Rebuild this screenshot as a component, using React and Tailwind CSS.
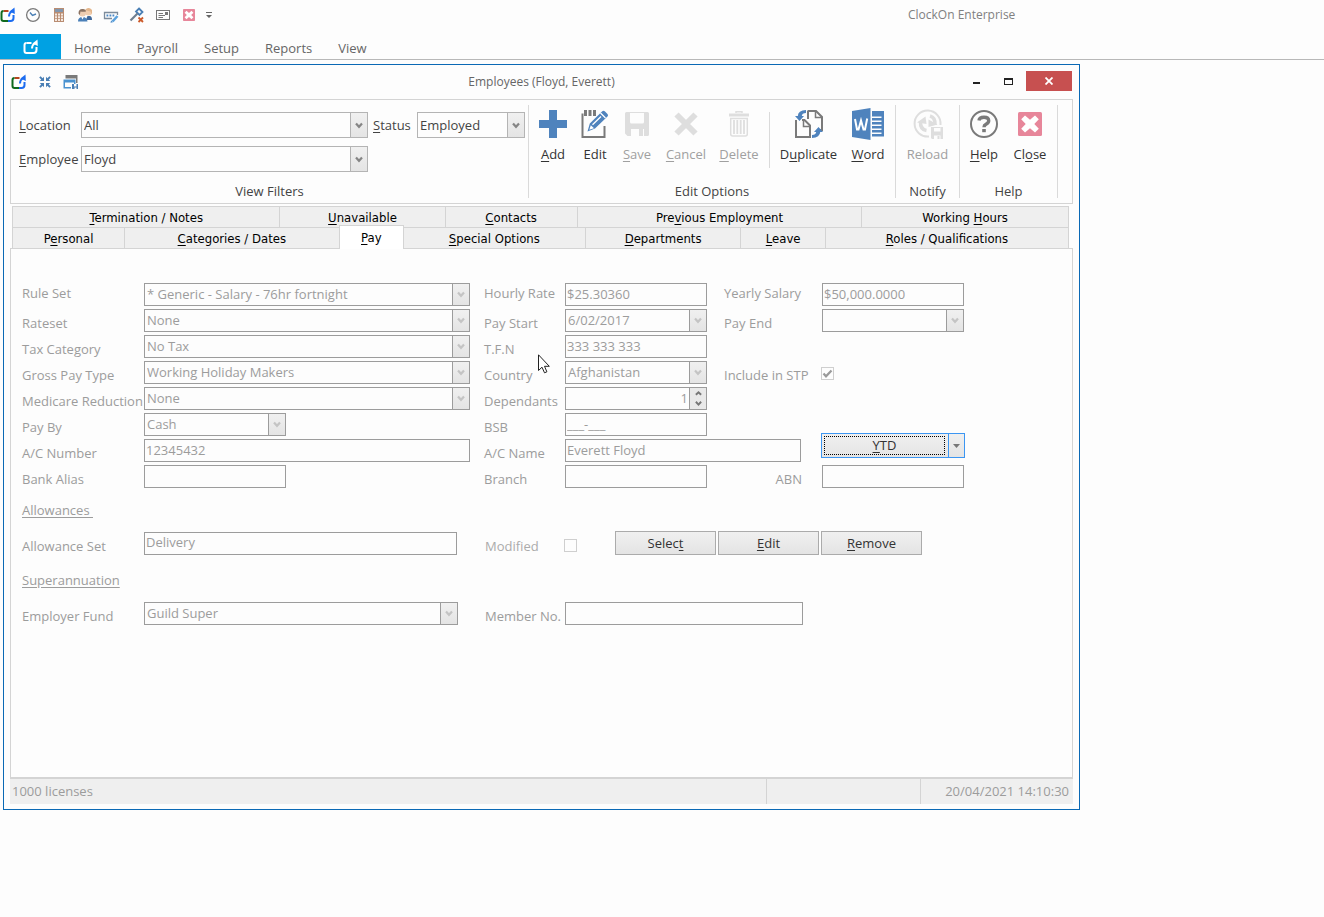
import React from "react";

const SANS = "font-['Open_Sans','Noto_Sans',sans-serif]";

/* Splits "Lo&cation" style captions and underlines the access key. */
function Key({ text }) {
  const at = text.indexOf("&");
  if (at < 0) return <>{text}</>;
  return (
    <>
      {text.slice(0, at)}
      <span className="underline underline-offset-2">{text[at + 1]}</span>
      {text.slice(at + 2)}
    </>
  );
}

/* ---------- icons ---------- */

function Logo({ mono = false }) {
  const a = mono ? "#fff" : "#b5441c";
  const b = mono ? "#fff" : "#0f6a1e";
  const c = mono ? "#fff" : "#1c6cf0";
  return (
    <svg width="16" height="16" viewBox="0 0 16 16" fill="none" strokeWidth="2" aria-hidden="true">
      <path d="M8.5 4H3.5" stroke={a} />
      <path d="M3.5 4Q1.5 4 1.500 6V12Q1.500 14 3.500 14H8" stroke={b} />
      <path d="M8 14H10.500Q13.500 14 13.500 11V8" stroke={c} />
      <path d="M9 9.500Q9 6 12 4" stroke={c} />
      <path d="M9.500 4.500 14.500.5 14.800 7Z" fill={c} />
    </svg>
  );
}

const ClockIcon = () => (
  <svg width="16" height="16" viewBox="0 0 16 16" fill="none" aria-hidden="true">
    <circle cx="8" cy="8" r="6.4" stroke="#7a7a7a" strokeWidth="1.3" />
    <path d="M5 5.500 7.500 8.500 11 7" stroke="#4a7fb5" strokeWidth="1.400" />
  </svg>
);
const CalcIcon = () => (
  <svg width="12" height="14" viewBox="0 0 12 14" aria-hidden="true">
    <rect x="1" width="10" height="14" fill="#b98d72" />
    <rect x="2" y="1" width="8" height="3" fill="#8296ad" />
    <path d="M2 5.500h2v2H2zM5 5.500h2v2H5zM8 5.500h2v2H8zM2 8.300h2v2H2zM5 8.300h2v2H5zM8 8.300h2v2H8zM2 11h2v2H2zM5 11h2v2H5zM8 11h2v2H8z" fill="#f4e9e2" />
  </svg>
);
const PeopleIcon = () => (
  <svg width="16" height="16" viewBox="0 0 16 16" aria-hidden="true">
    <circle cx="11.500" cy="5" r="3.600" fill="#f0cdae" />
    <path d="M8 3Q11.500-.8 15 3V7.500L13.500 4.500Z" fill="#e3b68c" />
    <path d="M9 12.500 10.500 9H13Q15 9.500 15 13H9z" fill="#40689a" />
    <circle cx="5.500" cy="6" r="3.500" fill="#edcdb2" />
    <path d="M1.500 6.500Q1.500 1.500 6 2q3 .5 3 2.500Q6 5 3.500 4.500L2.800 8Z" fill="#8a7262" />
    <path d="M1 14.500Q1 10 5.500 10T10.500 14.500Z" fill="#4b80b8" />
    <path d="m4.300 10 1.200 2.500L6.800 10z" fill="#fff" />
  </svg>
);
const FieldPenIcon = () => (
  <svg width="17" height="15" viewBox="0 0 17 15" fill="none" aria-hidden="true">
    <path d="M9 10.500H1.500V4.500H14.500V7" stroke="#7c8b9b" strokeWidth="1.300" />
    <path d="M3.500 7.500h1.800M6.500 7.500h1.800M9.500 7.500h1.800" stroke="#4a88c6" strokeWidth="1.800" />
    <path d="M9.500 13.500 14.500 8" stroke="#5ba1dc" strokeWidth="2.600" />
    <path d="m7.500 14.800.6-2.300 1.900 1.700z" fill="#4a88c6" />
  </svg>
);
const KeyXIcon = () => (
  <svg width="16" height="16" viewBox="0 0 16 16" fill="none" aria-hidden="true">
    <path d="M10 1.500 13.500 5 10.500 8 7 4.500Z" stroke="#4a7fb5" strokeWidth="1.800" />
    <path d="M8.500 6.500 1.500 13.500" stroke="#6f7f90" strokeWidth="2.200" />
    <path d="m9.500 10.500 4.500 4.500m0-4.500L9.500 15" stroke="#cc5a2a" strokeWidth="1.800" />
  </svg>
);
const CardIcon = () => (
  <svg width="14" height="12" viewBox="0 0 14 12" fill="none" stroke="#777" aria-hidden="true">
    <rect x=".5" y="1.500" width="13" height="9" />
    <path d="M2.500 4.500H7M2.500 6.500H9M2.500 8.500H7" />
    <rect x="9" y="3" width="3" height="3" fill="#777" stroke="none" />
  </svg>
);
function RedX({ size }) {
  return (
    <svg width={size} height={size} viewBox="0 0 24 24" aria-hidden="true">
      <rect width="24" height="24" rx="1.500" fill="#e7869a" />
      <path d="m7 3.500 5 4.300 5-4.300 3.800 3.800L16.300 12l4.500 4.700L17 20.500l-5-4.300-5 4.300-3.800-3.800L7.700 12 3.200 7.300z" fill="#fff" />
    </svg>
  );
}
const ShrinkIcon = () => (
  <svg width="12" height="12" viewBox="0 0 12 12" fill="#4a7fb5" aria-hidden="true">
    <path d="M5 5H.8L2.200 3.600.2 1.600 1.600.2l2 2L5 .8zM7 5h4.200L9.800 3.600l2-2L10.400.2l-2 2L7 .8zM5 7H.8l1.400 1.400-2 2 1.400 1.400 2-2L5 11.200zM7 7h4.200L9.800 8.400l2 2-1.400 1.400-2-2L7 11.200z" />
  </svg>
);
const WindowsIcon = () => (
  <svg width="16" height="16" viewBox="0 0 16 16" aria-hidden="true">
    <path d="M2.500 1h12v8h-1.500V4.500H2.500z" fill="#7a7a7a" />
    <path d="M.5 5.500h12V10H11V8.500H2V13h6v1.500H.5z" fill="#4a92d0" />
    <path d="M9 10h2v2.500h2.500V10H15V15h-1.500v-1.500h-2V15H9z" fill="#4a7fb5" />
  </svg>
);

const AddIcon = () => (
  <svg width="28" height="28" viewBox="0 0 28 28" aria-hidden="true">
    <path d="M10 0h8v10h10v8H18v10h-8V18H0v-8h10z" fill="#4f83bd" />
  </svg>
);
const EditIcon = () => (
  <svg width="28" height="28" viewBox="0 0 28 28" aria-hidden="true">
    <path d="M1.500 3.500V27H23.500V16" fill="none" stroke="#7a7a7a" strokeWidth="2" />
    <path d="M3 0h3v6H3zM7.500 0h3v6h-3zM12 0h3v6h-3z" fill="#7a7a7a" />
    <path d="m6.500 21.500 2.300-8L21 1.500q1.500-1.500 3 0L26.500 4q1.200 1.300 0 2.600L14 18.500z" fill="#4f83bd" />
    <path d="m8.300 19.800 1.500-4.600 3.200 3z" fill="#fff" />
    <path d="m11.500 14.800 8.500-8.300M19.500 3l5 5" stroke="#fff" strokeWidth="1.300" />
  </svg>
);
const SaveIcon = () => (
  <svg width="24" height="24" viewBox="0 0 24 24" aria-hidden="true">
    <path fillRule="evenodd" d="M0 1.500Q0 0 1.500 0h21Q24 0 24 1.500v21Q24 24 22.500 24H2.500L0 21.500zM5 0v10q0 1.500 1.500 1.500h11Q19 11.500 19 10V0zM6 17v7h13v-7z" fill="#dedede" />
    <path d="M5 0h14v1H5zM14 17h4v7h-4z" fill="#dedede" />
  </svg>
);
const CancelIcon = () => (
  <svg width="24" height="24" viewBox="0 0 24 24" fill="none" stroke="#dedede" strokeWidth="6" aria-hidden="true">
    <path d="m2.500 2.500 19 19m0-19-19 19" />
  </svg>
);
const TrashIcon = () => (
  <svg width="20" height="26" viewBox="0 0 20 26" fill="none" stroke="#dedede" aria-hidden="true">
    <path d="M7 2V.8h6V2" strokeWidth="1.500" />
    <path d="M0 4h20" strokeWidth="3" />
    <path d="M1.700 7.500h16.600V23q0 2-2 2H3.700q-2 0-2-2z" strokeWidth="1.500" />
    <path d="M5 9v14M8.300 9v14M11.700 9v14M15 9v14" strokeWidth="1.800" />
  </svg>
);
const DuplicateIcon = () => (
  <svg width="28" height="28" viewBox="0 0 28 28" fill="none" aria-hidden="true">
    <path d="M12.500 1h8.500l6 6v13H23" stroke="#7a7a7a" strokeWidth="2" />
    <path d="M20.500 1v6.500H27M8.500 10v6.500H15" stroke="#7a7a7a" strokeWidth="1.500" />
    <path d="M1 10v17h14V15.500L9.500 10H7" stroke="#7a7a7a" strokeWidth="2" />
    <path d="M13 9V1" stroke="#7a7a7a" strokeWidth="2" />
    <path d="M11 0v3Q7 3 6.800 6H9L4.500 11 0 6h2.800Q3 .5 11 0zM17 28v-3q3.800 0 4.200-3H19l4.500-5 4.500 5h-2.800q-.2 5.500-8.200 6z" fill="#4f83bd" />
  </svg>
);
const WordIcon = () => (
  <svg width="32" height="32" viewBox="0 0 32 32" aria-hidden="true">
    <path d="M0 3 18.500 0v32L0 29z" fill="#4f83bd" />
    <path d="M20 3H32V28.500H20V26h9.500v-1.500H20v-2.500h9.500v-1.500H20V18h9.500v-1.500H20V14h9.500v-1.500H20V10h9.500V8.500H20z" fill="#4f83bd" />
    <path d="m3 11 2 10.500h1.500L9 12.500l2.500 9H13L15.200 10.500" fill="none" stroke="#fff" strokeWidth="2" />
  </svg>
);
const ReloadIcon = () => (
  <svg width="30" height="30" viewBox="0 0 30 30" fill="none" aria-hidden="true">
    <path d="M16 27.500A13 13 0 1 1 27.500 16" stroke="#dedede" strokeWidth="2" />
    <path d="M13.500 21.500Q7 20.500 7.500 12.500" stroke="#dedede" strokeWidth="3.500" />
    <path d="M4 13.500 12.500 7.500 13.500 15Z" fill="#dedede" />
    <path d="M17 7Q22.500 8.500 22 16" stroke="#dedede" strokeWidth="3.500" />
    <path d="M15.500 10.500V18L24.500 15.500Z" fill="#dedede" />
    <path fillRule="evenodd" d="M18 18h12v12H19l-1-1zm3 0v4.500h6.500V18zm0 8.500V30h6.500v-3.500z" fill="#dedede" />
    <path d="M21 18h6.500v1H21zM24.500 27h2v3h-2z" fill="#dedede" />
  </svg>
);
const HelpIcon = () => (
  <svg width="28" height="28" viewBox="0 0 28 28" fill="none" stroke="#7a7a7a" aria-hidden="true">
    <circle cx="14" cy="14" r="13" strokeWidth="2" />
    <path d="M9 10.500Q9.300 7.200 14 7.200t4.700 3.600Q18.700 12.800 16 14.200 14 15.200 14 17.200" strokeWidth="3.400" />
    <path d="M12.200 19h3.600v3.200h-3.600z" fill="#7a7a7a" stroke="none" />
  </svg>
);

function Chevron({ flip = false, className = "" }) {
  return (
    <svg width="8" height="7" viewBox="0 0 8 7" fill="none" stroke="currentColor" strokeWidth="2.200" className={className} aria-hidden="true">
      <path d={flip ? "M1 5 4 2.200 7 5" : "M1 1.500 4 4.800 7 1.500"} />
    </svg>
  );
}

/* ---------- form parts ---------- */

function Combo({ id, value, className, disabled = false, tall = false }) {
  return (
    <div className={"relative " + className}>
      <select
        id={id}
        disabled={disabled}
        defaultValue={value}
        className={
          "block w-full appearance-none rounded-none border pl-[2px] pr-5 text-[13px] opacity-100 outline-none " +
          (tall ? "h-[26px] border-[#b4b4b4] pt-[2px] text-[#444]" : "h-[23px] border-[#9c9c9c] text-[#9c9c9c]")
        }
      >
        <option value={value}>{value}</option>
      </select>
      <span
        className={
          "pointer-events-none absolute inset-y-px right-px flex w-[17px] items-center justify-center border-l bg-gradient-to-b from-[#f0f0f0] to-[#e4e4e4] " +
          (tall ? "border-[#b4b4b4] text-[#858585]" : "border-[#9c9c9c] text-[#c4c4c4]")
        }
      >
        <Chevron />
      </span>
    </div>
  );
}

function Box({ id, value = "", className }) {
  return (
    <input
      id={id}
      type="text"
      disabled
      defaultValue={value}
      className={"block h-[23px] border border-[#9c9c9c] bg-transparent px-px pb-[2px] text-[13px] text-[#9c9c9c] " + className}
    />
  );
}

function Label({ htmlFor, children, className = "" }) {
  return (
    <label htmlFor={htmlFor} className={"whitespace-nowrap leading-[17px] " + (className || "pt-[6px]")}>
      {children}
    </label>
  );
}

function Check({ id, checked = false, className = "" }) {
  return (
    <span className={"relative block size-[13px] " + className}>
      <input id={id} type="checkbox" disabled defaultChecked={checked} className="block size-[13px] appearance-none border border-[#cfcfcf]" />
      {checked && (
        <svg width="13" height="13" viewBox="0 0 13 13" fill="none" className="pointer-events-none absolute inset-0" aria-hidden="true">
          <path d="M2.500 6.500 5 9.300 10.500 3.500" stroke="#9a9a9a" strokeWidth="2.200" />
        </svg>
      )}
    </span>
  );
}

function PushButton({ text }) {
  return (
    <button type="button" className="h-6 w-[101px] border border-[#ababab] bg-gradient-to-b from-[#f0f0f0] to-[#e4e4e4] pt-px text-[#333]">
      <Key text={text} />
    </button>
  );
}

function Tool({ text, icon, className, disabled = false }) {
  return (
    <button type="button" disabled={disabled} className={"flex flex-col items-center gap-[6px] " + className + (disabled ? " text-[#a0a0a0]" : " text-[#333]")}>
      <span className="flex h-8 items-center justify-center">{icon}</span>
      <span className="leading-[17px]"><Key text={text} /></span>
    </button>
  );
}

function Group({ caption, className, children }) {
  return (
    <section className={"flex flex-col justify-between border-r border-[#dadada] " + className}>
      {children}
      <h2 className="text-center leading-[13px] text-[#444]">{caption}</h2>
    </section>
  );
}

const TABS_TOP = [
  ["&Termination / Notes", "flex-[268_1_0%]"],
  ["&Unavailable", "flex-[165_1_0%]"],
  ["&Contacts", "flex-[132_1_0%]"],
  ["Pre&vious Employment", "flex-[285_1_0%]"],
  ["Working &Hours", "flex-[207_1_0%]"],
];
const TABS_BOTTOM = [
  ["P&ersonal", "flex-[112_1_0%]"],
  ["&Categories / Dates", "flex-[215_1_0%]"],
  ["&Pay", "flex-[64_1_0%]"],
  ["&Special Options", "flex-[182_1_0%]"],
  ["&Departments", "flex-[156_1_0%]"],
  ["&Leave", "flex-[84_1_0%]"],
  ["&Roles / Qualifications", "flex-[244_1_0%]"],
];

function TabRow({ tabs }) {
  return (
    <div role="tablist" className="flex h-[21px] items-end border-l border-[#d4d4d4]">
      {tabs.map(([text, grow]) => {
        const active = text === "&Pay";
        return (
          <button
            key={text}
            type="button"
            role="tab"
            aria-selected={active}
            className={
              "min-w-0 border-r border-t border-[#d4d4d4] pt-px leading-5 " + grow + (active ? " z-10 -mb-px -ml-px h-6 border-l bg-white" : " h-[21px] bg-[#efefef]")
            }
          >
            <Key text={text} />
          </button>
        );
      })}
    </div>
  );
}

function PayForm() {
  return (
    <form className="px-[11px] pt-[34px] text-[13px] text-[#9c9c9c]">
      <div className="grid grid-cols-[122px_340px_81px_159px_98px_143px] grid-rows-[repeat(8,23px)] items-center gap-y-[3px]">
        <Label htmlFor="rule" className="-mt-[2px]">Rule Set</Label>
        <Combo id="rule" value="* Generic - Salary - 76hr fortnight" className="w-[326px]" disabled />
        <Label htmlFor="hourly" className="-mt-[2px]">Hourly Rate</Label>
        <Box id="hourly" value="$25.30360" className="w-[142px]" />
        <Label htmlFor="yearly" className="-mt-[2px]">Yearly Salary</Label>
        <Box id="yearly" value="$50,000.0000" className="w-[142px]" />

        <Label htmlFor="rateset">Rateset</Label>
        <Combo id="rateset" value="None" className="w-[326px]" disabled />
        <Label htmlFor="start">Pay Start</Label>
        <Combo id="start" value="6/02/2017" className="w-[142px]" disabled />
        <Label htmlFor="end">Pay End</Label>
        <Combo id="end" value="" className="w-[142px]" disabled />

        <Label htmlFor="tax">Tax Category</Label>
        <Combo id="tax" value="No Tax" className="w-[326px]" disabled />
        <Label htmlFor="tfn">T.F.N</Label>
        <Box id="tfn" value="333 333 333" className="w-[142px]" />

        <Label htmlFor="gross" className="col-start-1 pt-[6px]">Gross Pay Type</Label>
        <Combo id="gross" value="Working Holiday Makers" className="w-[326px]" disabled />
        <Label htmlFor="country">Country</Label>
        <Combo id="country" value="Afghanistan" className="w-[142px]" disabled />
        <Label htmlFor="stp">Include in STP</Label>
        <Check id="stp" checked className="-ml-px mt-[2px]" />

        <Label htmlFor="medicare">Medicare Reduction</Label>
        <Combo id="medicare" value="None" className="w-[326px]" disabled />
        <Label htmlFor="dependants">Dependants</Label>
        <div className="flex h-[23px] w-[142px] border border-[#9c9c9c]">
          <input id="dependants" type="text" inputMode="numeric" disabled defaultValue="1" className="min-w-0 flex-1 bg-transparent pr-px text-right text-[#9c9c9c]" />
          <div className="flex w-[17px] flex-col border-l border-[#9c9c9c] bg-[#e9e9e9] text-[#777]">
            <button type="button" aria-label="Increase" className="flex flex-1 items-center justify-center"><Chevron flip className="size-[7px]" /></button>
            <button type="button" aria-label="Decrease" className="flex flex-1 items-center justify-center"><Chevron className="size-[7px]" /></button>
          </div>
        </div>

        <Label htmlFor="payby" className="col-start-1 pt-[6px]">Pay By</Label>
        <Combo id="payby" value="Cash" className="w-[142px]" disabled />
        <Label htmlFor="bsb">BSB</Label>
        <Box id="bsb" value="___-___" className="w-[142px]" />

        <Label htmlFor="acnumber" className="col-start-1 row-start-7 pt-[6px]">A/C Number</Label>
        <Box id="acnumber" value="12345432" className="row-start-7 w-[326px]" />
        <Label htmlFor="acname" className="row-start-7 pt-[6px]">A/C Name</Label>
        <Box id="acname" value="Everett Floyd" className="col-span-2 row-start-7 w-[236px]" />

        <div className="col-start-6 row-span-2 row-start-6 -ml-px mb-1 flex h-[25px] w-[144px] self-end border border-[#3c96f2] bg-gradient-to-b from-[#f0f0f0] to-[#e4e4e4]">
          <button type="button" className="m-[2px] mr-[3px] flex flex-1 items-center justify-center border border-dotted border-black text-[#333]"><Key text="&YTD" /></button>
          <button type="button" aria-label="YTD options" className="flex w-4 items-center justify-center border-l border-[#3c96f2]">
            <svg width="7" height="4" viewBox="0 0 7 4" fill="#777" aria-hidden="true"><path d="M0 0h7L3.500 4z" /></svg>
          </button>
        </div>

        <Label htmlFor="alias" className="col-start-1 row-start-8 pt-[6px]">Bank Alias</Label>
        <Box id="alias" className="row-start-8 w-[142px]" />
        <Label htmlFor="branch" className="row-start-8 pt-[6px]">Branch</Label>
        <Box id="branch" className="row-start-8 w-[142px]" />
        <Label htmlFor="abn" className="row-start-8 pr-5 pt-[6px] text-right">ABN</Label>
        <Box id="abn" className="row-start-8 w-[142px]" />
      </div>

      <h3 className="mt-[14px] whitespace-pre leading-[17px] underline underline-offset-2">{"Allowances "}</h3>
      <div className="mt-3 grid grid-cols-[122px_341px_79px_51px_1fr] items-center">
        <Label htmlFor="allowance">Allowance Set</Label>
        <Box id="allowance" value="Delivery" className="w-[313px]" />
        <Label htmlFor="modified" className="pt-[6px] text-[#ababab]">Modified</Label>
        <Check id="modified" className="mt-1" />
        <div className="flex gap-[2px]">
          <PushButton text="Selec&t" />
          <PushButton text="&Edit" />
          <PushButton text="&Remove" />
        </div>
      </div>

      <h3 className="mt-[17px] leading-[17px] underline underline-offset-2">Superannuation</h3>
      <div className="mt-[13px] grid grid-cols-[122px_341px_80px_1fr] items-center">
        <Label htmlFor="fund">Employer Fund</Label>
        <Combo id="fund" value="Guild Super" className="w-[314px]" disabled />
        <Label htmlFor="member">Member No.</Label>
        <Box id="member" className="w-[238px]" />
      </div>
    </form>
  );
}

const QUICK = [ClockIcon, CalcIcon, PeopleIcon, FieldPenIcon, KeyXIcon, CardIcon];

export default function App() {
  return (
    <div className={"min-h-screen bg-[#fdfdfd] text-[13px] text-[#333] " + SANS}>
      <header>
        <div className="flex h-[34px] items-center pb-1">
          <div className="flex flex-1 items-center">
            <span className="w-5"><Logo /></span>
            {QUICK.map((Icon, i) => (
              <span key={i} className="flex w-[26px] justify-center"><Icon /></span>
            ))}
            <span className="flex w-[26px] justify-center"><RedX size={12} /></span>
            <span className="flex w-[14px] justify-center">
              <svg width="6" height="7" viewBox="0 0 6 7" fill="#666" aria-hidden="true"><path d="M0 0h6v1H0zM0 3h6L3 6z" /></svg>
            </span>
          </div>
          <h1 className="w-[416px] text-[12px] text-[#808080]">ClockOn Enterprise</h1>
        </div>
        <nav className="flex h-[26px] border-b border-[#b8b8b8] text-[#666]">
          <button type="button" aria-label="Application menu" className="flex w-[61px] items-center justify-center bg-[#00a1e3]"><Logo mono /></button>
          <div className="flex items-center pt-1">
            {["Home", "Payroll", "Setup", "Reports", "View"].map((t) => (
              <a key={t} href="#" className="px-[13px]">{t}</a>
            ))}
          </div>
        </nav>
      </header>

      <main className="relative ml-[3px] mt-1 flex min-h-[746px] max-w-[1077px] flex-col border border-[#0a69b5] px-[6px] pb-[5px]">
        <div className="grid h-[34px] grid-cols-3 items-center">
          <div className="flex items-center gap-3 pl-px">
            <Logo />
            <ShrinkIcon />
            <WindowsIcon />
          </div>
          <h2 className="text-center text-[12px] text-[#666]">Employees (Floyd, Everett)</h2>
          <div className="-mt-[2px] mr-px flex items-center justify-end">
            <button type="button" aria-label="Minimize" className="flex w-8 justify-center"><svg width="7" height="6" viewBox="0 0 7 6" aria-hidden="true"><path d="M0 4h7v2H0z" fill="#222" /></svg></button>
            <button type="button" aria-label="Maximize" className="mr-[2px] flex w-8 justify-center"><svg width="9" height="7" viewBox="0 0 9 7" aria-hidden="true"><path fillRule="evenodd" d="M0 0h9v7H0zM1 2v4h7V2z" fill="#222" /></svg></button>
            <button type="button" aria-label="Close window" className="flex h-5 w-[46px] items-center justify-center bg-[#c75050]"><svg width="8" height="8" viewBox="0 0 8 8" stroke="#fff" strokeWidth="1.800" aria-hidden="true"><path d="m.5.5 7 7m0-7-7 7" /></svg></button>
          </div>
        </div>

        <div className="flex h-[105px] border border-[#d4d4d4] py-[5px]">
          <Group caption="View Filters" className="w-[518px] shrink-0">
            <div className="grid grid-cols-[62px_292px_44px_108px] items-center gap-y-2 pl-2 pt-[7px] text-[#444]">
              <label htmlFor="location" className="pt-[2px]"><Key text="&Location" /></label>
              <Combo id="location" value="All" className="w-[287px]" tall />
              <label htmlFor="status" className="pt-[2px]"><Key text="&Status" /></label>
              <Combo id="status" value="Employed" className="w-[108px]" tall />
              <label htmlFor="employee" className="pt-[2px]"><Key text="&Employee" /></label>
              <Combo id="employee" value="Floyd" className="w-[287px]" tall />
            </div>
          </Group>
          <Group caption="Edit Options" className="w-[367px] shrink-0">
            <div className="flex pl-[3px] pt-[3px]">
              <Tool text="&Add" icon={<AddIcon />} className="w-[42px]" />
              <Tool text="Edit" icon={<EditIcon />} className="w-[42px]" />
              <Tool text="&Save" icon={<SaveIcon />} className="w-[42px]" disabled />
              <Tool text="&Cancel" icon={<CancelIcon />} className="w-[56px]" disabled />
              <Tool text="&Delete" icon={<TrashIcon />} className="w-[50px]" disabled />
              <span className="-mb-[5px] ml-[5px] mr-[6px] mt-1 w-px bg-[#dadada]" />
              <Tool text="D&uplicate" icon={<DuplicateIcon />} className="w-[65px]" />
              <Tool text="&Word" icon={<WordIcon />} className="w-[54px]" />
            </div>
          </Group>
          <Group caption="Notify" className="w-16 shrink-0">
            <div className="flex justify-center pt-[3px]">
              <Tool text="Reload" icon={<ReloadIcon />} className="w-[54px]" disabled />
            </div>
          </Group>
          <Group caption="Help" className="w-[98px] shrink-0">
            <div className="flex pt-[3px]">
              <Tool text="&Help" icon={<HelpIcon />} className="w-12" />
              <Tool text="Cl&ose" icon={<RedX size={24} />} className="w-11" />
            </div>
          </Group>
        </div>

        <div className="ml-[2px] mr-1 mt-[2px] font-['DejaVu_Sans_Condensed','Noto_Sans',sans-serif] text-[13px] text-black">
          <TabRow tabs={TABS_TOP} />
          <TabRow tabs={TABS_BOTTOM} />
        </div>

        <div className="flex-1 border border-b-2 border-[#d4d4d4]">
          <PayForm />
        </div>

        <footer className="flex h-[25px] items-stretch bg-[#efefef] leading-[25px] text-[#9c9c9c]">
          <span className="flex-1 pl-[2px]">1000 licenses</span>
          <span className="w-[154px] border-l border-[#d4d4d4]" />
          <span className="w-[153px] border-l border-[#d4d4d4] pr-1 text-right">20/04/2021 14:10:30</span>
        </footer>

        <svg width="12" height="20" viewBox="0 0 12 20" className="pointer-events-none absolute left-[534px] top-[289px]" aria-hidden="true">
          <path d="M.5.800V16.500L4 13.200l2.500 5.600 2.400-1-2.400-5.500h4.800z" fill="#fff" stroke="#222" />
        </svg>
      </main>
    </div>
  );
}
